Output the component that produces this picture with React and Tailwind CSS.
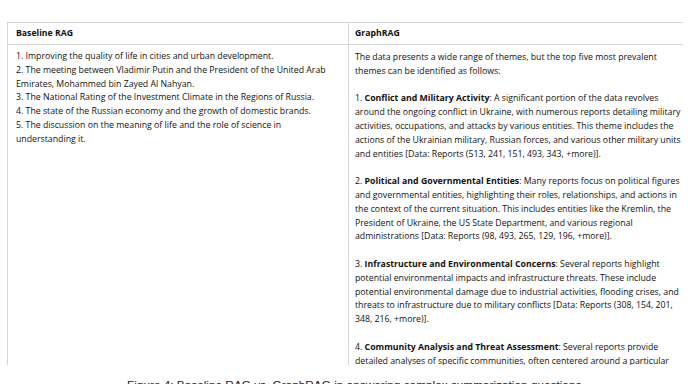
const baseline = [
  '1. Improving the quality of life in cities and urban development.',
  '2. The meeting between Vladimir Putin and the President of the United Arab',
  'Emirates, Mohammed bin Zayed Al Nahyan.',
  '3. The National Rating of the Investment Climate in the Regions of Russia.',
  '4. The state of the Russian economy and the growth of domestic brands.',
  '5. The discussion on the meaning of life and the role of science in',
  'understanding it.',
];

// each paragraph: [number, bold title, first line rest, ...following lines]
const themes = [
  {
    n: '1.',
    title: 'Conflict and Military Activity',
    lines: [
      ': A significant portion of the data revolves',
      'around the ongoing conflict in Ukraine, with numerous reports detailing military',
      'activities, occupations, and attacks by various entities. This theme includes the',
      'actions of the Ukrainian military, Russian forces, and various other military units',
      'and entities [Data: Reports (513, 241, 151, 493, 343, +more)].',
    ],
  },
  {
    n: '2.',
    title: 'Political and Governmental Entities',
    lines: [
      ': Many reports focus on political figures',
      'and governmental entities, highlighting their roles, relationships, and actions in',
      'the context of the current situation. This includes entities like the Kremlin, the',
      'President of Ukraine, the US State Department, and various regional',
      'administrations [Data: Reports (98, 493, 265, 129, 196, +more)].',
    ],
  },
  {
    n: '3.',
    title: 'Infrastructure and Environmental Concerns',
    lines: [
      ': Several reports highlight',
      'potential environmental impacts and infrastructure threats. These include',
      'potential environmental damage due to industrial activities, flooding crises, and',
      'threats to infrastructure due to military conflicts [Data: Reports (308, 154, 201,',
      '348, 216, +more)].',
    ],
  },
  {
    n: '4.',
    title: 'Community Analysis and Threat Assessment',
    lines: [
      ': Several reports provide',
      'detailed analyses of specific communities, often centered around a particular',
    ],
  },
];

function Line({ children }) {
  return <div className="whitespace-nowrap">{children}</div>;
}

export default function App() {
  return (
    <div
      className="w-[700px] h-[384px] overflow-hidden bg-white text-[#111]"
      style={{ fontFamily: '"Open Sans", "Noto Sans", sans-serif' }}
    >
      <div className="h-[22px]" />
      <div className="ml-[7px] w-[676px] border-t border-l border-[#d4d4d4] flex flex-col">
        <div className="flex h-[22px] border-b border-[#d4d4d4] text-[8.7px] font-bold">
          <div className="w-[341px] border-r border-[#d4d4d4] pl-[8px] flex items-center">Baseline RAG</div>
          <div className="flex-1 pl-[6px] flex items-center">GraphRAG</div>
        </div>
        <div className="flex h-[320px] text-[8.75px] leading-[13.8px]">
          <div className="w-[341px] border-r border-[#d4d4d4] pl-[8px] pt-[5px]">
            {baseline.map((l, i) => (
              <Line key={i}>{l}</Line>
            ))}
          </div>
          <div className="flex-1 pl-[6px] pt-[6px] overflow-hidden">
            <Line>The data presents a wide range of themes, but the top five most prevalent</Line>
            <Line>themes can be identified as follows:</Line>
            {themes.map((t, i) => (
              <div key={i} className="mt-[13.8px]">
                <Line>
                  {t.n} <span className="font-bold">{t.title}</span>
                  {t.lines[0]}
                </Line>
                {t.lines.slice(1).map((l, j) => (
                  <Line key={j}>{l}</Line>
                ))}
              </div>
            ))}
          </div>
        </div>
      </div>
      <div
        className="mt-[12px] pl-[127px] text-[11.8px] text-[#222] whitespace-nowrap"
        style={{ fontFamily: '"Liberation Sans", Arial, sans-serif' }}
      >
        Figure 4: Baseline RAG vs. GraphRAG in answering complex summarization questions
      </div>
    </div>
  );
}
